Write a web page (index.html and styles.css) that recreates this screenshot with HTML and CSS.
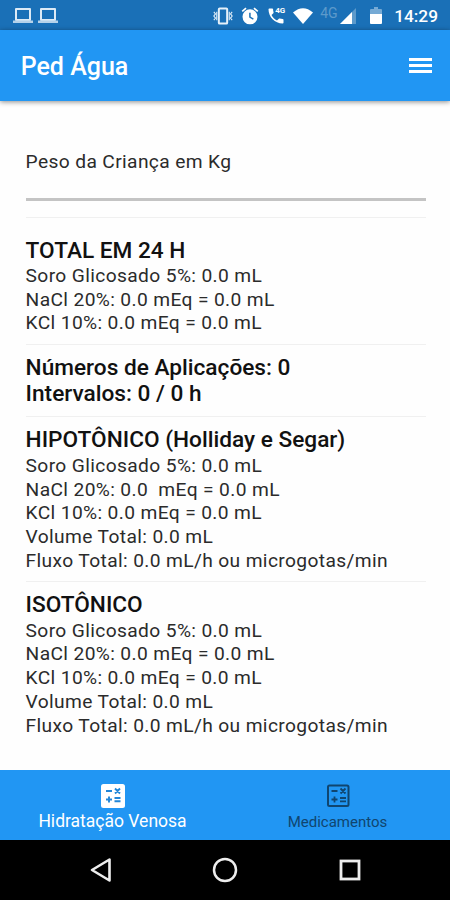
FILE: index.html
```html
<!doctype html>
<html lang="pt-BR">

<head>
  <meta charset="utf-8">
  <title>Ped Água</title>
  <link rel="stylesheet" href="styles.css">
</head>

<body>
  <div class="status-bar">
    <div class="status-left">
      <svg width="20" height="17" viewBox="0 0 20 17">
        <path d="M3 2h14v11H3z" fill="none" stroke="#dceaf6" stroke-width="2" stroke-linejoin="round" />
        <path d="M0 13.500h20v2.500H0z" fill="#b5d2ea" />
      </svg>
      <svg width="20" height="17" viewBox="0 0 20 17">
        <path d="M3 2h14v11H3z" fill="none" stroke="#dceaf6" stroke-width="2" stroke-linejoin="round" />
        <path d="M0 13.500h20v2.500H0z" fill="#b5d2ea" />
      </svg>
    </div>
    <div class="status-right">
      <svg class="vibrate" width="20" height="20" viewBox="0 0 24 24" fill="none" stroke="#e6f1fa" stroke-width="2">
        <rect x="7" y="3" width="10" height="18" rx="1" stroke-width="2.400" />
        <path d="M1 7l2 2.500L1 12l2 2.500L1 17M4.500 7v10M23 7l-2 2.500 2 2.500-2 2.500 2 2.500M19.500 7v10" stroke-width="1.300" />
      </svg>
      <svg class="alarm" width="20" height="20" viewBox="0 0 24 24" fill="#fff">
        <path fill-rule="evenodd" d="M22 5.700l-4.600-3.900-1.300 1.500 4.600 3.900zM7.900 3.400L6.600 1.900 2 5.700l1.300 1.500zM12 4a9 9 0 1 0 0 18 9 9 0 0 0 0-18zm-1 4h1.800v4.800l3.700 2.200-.9 1.500L11 13.800z" />
      </svg>
      <div class="call">
        <svg width="20" height="20" viewBox="0 0 24 24" fill="#fff">
          <path d="M6.620 10.790c1.440 2.830 3.760 5.140 6.590 6.590l2.200-2.200c.27-.27.67-.36 1.020-.24 1.120.37 2.330.57 3.570.57.550 0 1 .45 1 1V20c0 .55-.45 1-1 1C10.610 21 3 13.390 3 4c0-.55.45-1 1-1h3.500c.55 0 1 .45 1 1 0 1.250.2 2.450.57 3.570.11.35.03.74-.25 1.020l-2.200 2.200z" />
        </svg>
        <span class="call-label">4G</span>
      </div>
      <svg class="wifi" width="22" height="18" viewBox="0 0 22 18">
        <path d="M1 5.500Q11-3 21 5.500L11 17z" fill="#fff" />
      </svg>
      <span class="network">4G</span>
      <svg class="signal" width="16" height="16" viewBox="0 0 16 16">
        <path d="M0 16L16 0v16z" fill="#5d9acb" />
        <path d="M0 16L12 4v12z" fill="#fff" />
      </svg>
      <svg class="battery" width="12" height="17" viewBox="0 0 12 17">
        <path d="M4 0h4v2h3q1 0 1 1v4H0V3q0-1 1-1h3z" fill="#76aad5" />
        <path d="M0 7h12v9q0 1-1 1H1q-1 0-1-1z" fill="#fff" />
      </svg>
      <span class="clock">14:29</span>
    </div>
  </div>

  <header class="app-bar">
    <h1>Ped Água</h1>
    <div class="menu">
      <span></span>
      <span></span>
      <span></span>
    </div>
  </header>

  <main>
    <div class="weight">Peso da Criança em Kg</div>

    <section class="total">
      <h2>TOTAL EM 24 H</h2>
      <p>Soro Glicosado 5%: 0.0 mL</p>
      <p>NaCl 20%: 0.0 mEq = 0.0 mL</p>
      <p>KCl 10%: 0.0 mEq = 0.0 mL</p>
    </section>

    <section>
      <h2>Números de Aplicações: 0</h2>
      <h2>Intervalos: 0 / 0 h</h2>
    </section>

    <section>
      <h2>HIPOTÔNICO (Holliday e Segar)</h2>
      <p>Soro Glicosado 5%: 0.0 mL</p>
      <p>NaCl 20%: 0.0&nbsp; mEq = 0.0 mL</p>
      <p>KCl 10%: 0.0 mEq = 0.0 mL</p>
      <p>Volume Total: 0.0 mL</p>
      <p>Fluxo Total: 0.0 mL/h ou microgotas/min</p>
    </section>

    <section>
      <h2>ISOTÔNICO</h2>
      <p>Soro Glicosado 5%: 0.0 mL</p>
      <p>NaCl 20%: 0.0 mEq = 0.0 mL</p>
      <p>KCl 10%: 0.0 mEq = 0.0 mL</p>
      <p>Volume Total: 0.0 mL</p>
      <p>Fluxo Total: 0.0 mL/h ou microgotas/min</p>
    </section>
  </main>

  <nav class="tabs">
    <div class="tab active">
      <svg width="24" height="24" viewBox="0 0 24 24">
        <rect width="24" height="24" rx="2.500" fill="#fff" />
        <path d="M5 7h6M5 15.500h6M8 12.500v6M14 4.500l5 5M19 4.500l-5 5M13.500 14h6M13.500 17.300h6" fill="none" stroke="#2186d8" stroke-width="1.900" />
      </svg>
      <span>Hidratação Venosa</span>
    </div>
    <div class="tab">
      <svg width="24" height="24" viewBox="0 0 24 24" fill="none" stroke="#10456f">
        <rect x="2" y="1.500" width="20.500" height="20.500" rx="1.500" stroke-width="2" />
        <path d="M5.500 7h6M5.500 15.500h6M8.500 12.500v6M14.500 4.500l5 5M19.500 4.500l-5 5M14 14h6M14 17.300h6" stroke-width="1.800" />
      </svg>
      <span>Medicamentos</span>
    </div>
  </nav>

  <div class="system-nav">
    <svg width="24" height="26" viewBox="0 0 24 26">
      <path d="M4 13L21.500 2.500v21z" fill="none" stroke="#eee" stroke-width="2.600" stroke-linejoin="round" />
    </svg>
    <svg width="26" height="26" viewBox="0 0 26 26">
      <circle cx="13" cy="13" r="11" fill="none" stroke="#eee" stroke-width="2.500" />
    </svg>
    <svg width="24" height="24" viewBox="0 0 24 24">
      <rect x="3" y="3" width="18" height="18" fill="none" stroke="#eee" stroke-width="2.800" />
    </svg>
  </div>
</body>

</html>
```

FILE: styles.css
```css
*,
*::before,
*::after {
  box-sizing: border-box;
}

body {
  margin: 0;
  width: 450px;
  height: 900px;
  display: flex;
  flex-direction: column;
  overflow: hidden;
  background: #fefefe;
  font-family: Roboto, "Liberation Sans", sans-serif;
  color: #2b2b2b;
}

h1,
h2,
p {
  margin: 0;
}

svg {
  display: block;
  flex: none;
}

.status-bar {
  height: 30px;
  flex: none;
  display: flex;
  justify-content: space-between;
  padding: 1px 12px 0 13px;
  background: #1a70b7;
  color: #fff;
}

.status-left,
.status-right {
  display: flex;
  align-items: center;
}

.status-left {
  gap: 5px;
}

.alarm {
  margin-left: 7px;
}

.call {
  position: relative;
  margin-left: 6px;
}

.call-label {
  position: absolute;
  top: 0;
  left: 9px;
  font-size: 8px;
  line-height: 9px;
  font-weight: 700;
}

.wifi {
  margin-left: 6px;
}

.network {
  margin-left: 6px;
  margin-top: -6px;
  width: 20px;
  font-size: 14px;
  color: #5d9acb;
}

.battery {
  margin-left: 14px;
}

.clock {
  margin-left: 12px;
  font-size: 17.300px;
  font-weight: 500;
}

.app-bar {
  height: 71px;
  margin-bottom: -1px;
  flex: none;
  display: flex;
  align-items: center;
  justify-content: space-between;
  padding: 1px 18px 0 20.700px;
  background: #2196f3;
  color: #fff;
  box-shadow: 0 1px 5px rgba(0, 0, 0, .45);
}

.app-bar h1 {
  font-size: 25px;
  font-weight: 500;
}

.menu {
  width: 23px;
  display: flex;
  flex-direction: column;
  gap: 3px;
  padding-bottom: 2px;
}

.menu span {
  height: 3px;
  background: #fff;
}

main {
  flex: 1;
  padding: 0 24.400px 0 25.600px;
}

.weight {
  height: 101px;
  padding-top: 50px;
  border-bottom: 3px solid #c4c4c4;
  font-size: 19.200px;
  line-height: 24px;
  letter-spacing: .37px;
}

section {
  padding: 10.200px 0 8.500px;
  border-top: 1px solid #f0f0f0;
}

.total {
  margin-top: 16px;
  padding-top: 19.500px;
}

h2 {
  font-size: 22.650px;
  line-height: 26.400px;
  font-weight: 500;
  color: #111;
}

p {
  font-size: 19.200px;
  line-height: 23.750px;
  letter-spacing: .37px;
}

.tabs {
  height: 70px;
  flex: none;
  display: flex;
  background: #2196f3;
}

.tab {
  flex: 1;
  display: flex;
  flex-direction: column;
  align-items: center;
  gap: 2px;
  padding-top: 14px;
  font-size: 15px;
  line-height: 24px;
  color: #10456f;
}

.tab.active {
  gap: 1px;
  font-size: 17.500px;
  color: #fff;
}

.system-nav {
  height: 60px;
  flex: none;
  display: flex;
  align-items: center;
  justify-content: center;
  gap: 100px;
  background: #000;
}
```
